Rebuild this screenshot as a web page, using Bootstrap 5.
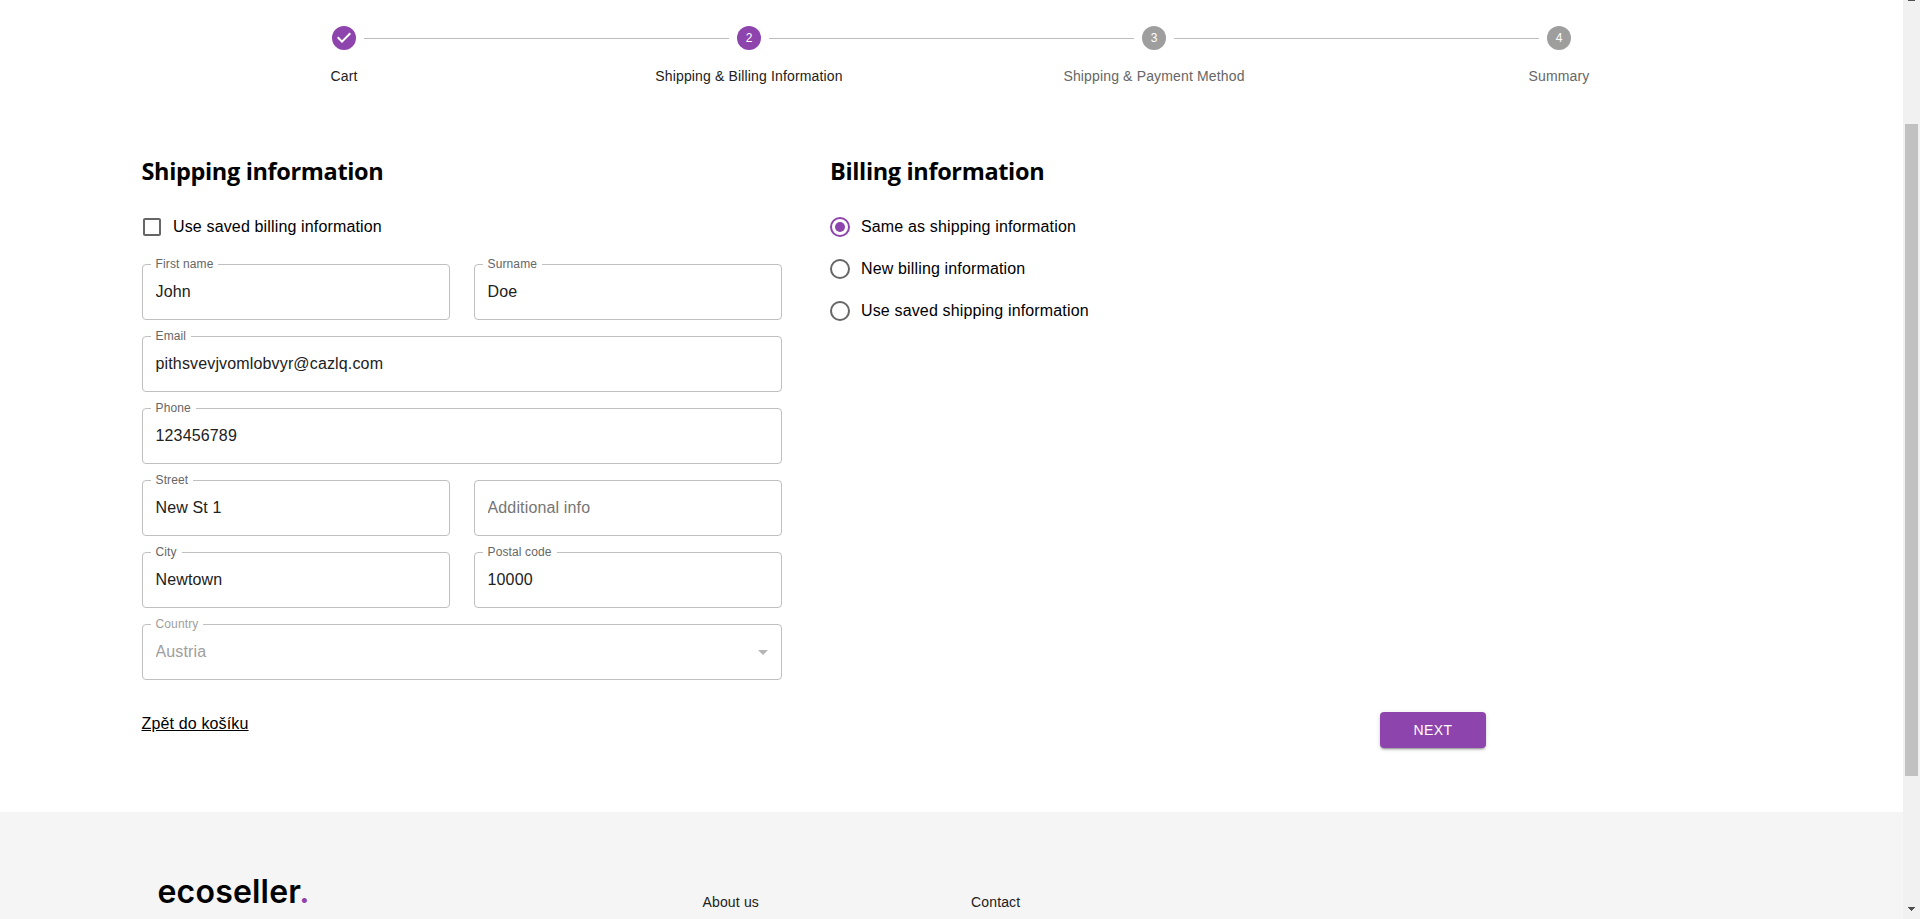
<!DOCTYPE html>
<html lang="en">
<head>
<meta charset="utf-8">
<meta name="viewport" content="width=device-width, initial-scale=1">
<title>ecoseller – Shipping &amp; Billing Information</title>
<link href="https://cdn.jsdelivr.net/npm/bootstrap@5.3.0/dist/css/bootstrap.min.css" rel="stylesheet">
<style>
  :root { --brand: #8e44ad; --line: #bdbdbd; --outline: #c0c0c0; --muted: #666; }
  body { font-family: "Liberation Sans", Arial, sans-serif; color: #000; letter-spacing: .15px; background: #fff; }
  .viewport { height: 919px; }
  .page-inner { width: 1620px; margin-left: 141.5px; }

  /* stepper */
  .stepper { padding-top: 26px; }
  .step { font-size: 14px; line-height: 20px; }
  .step .track { height: 24px; }
  .step .rail { height: 0; margin-top: 1px; border-top: 1px solid var(--line); }
  .step .rail.none { border-color: transparent; }
  .step .dot { width: 24px; height: 24px; margin: 0 8px; display: block; }
  .step .caption { margin-top: 16px; color: var(--muted); }
  .step .caption.on { color: #212121; }
  .dot text { font: 12px "Liberation Sans", Arial, sans-serif; fill: #fff; letter-spacing: 0; }

  /* forms */
  .forms { margin-top: 65px; height: 561px; }
  .ship { width: 640px; }
  .bill { width: 656px; margin-left: 48.5px; }
  h2 { font: 700 23.5px/40px "Open Sans", "Noto Sans", sans-serif; letter-spacing: -.35px; }
  .choices { padding-top: 15px; }
  .choice { height: 42px; line-height: 24px; gap: 9px; margin-left: -1.5px; }
  .bill .choice { margin-left: -2px; }
  .choice svg { width: 24px; height: 24px; }
  .fields { display: grid; grid-template-columns: 308px 308px; column-gap: 24px; row-gap: 16px; margin-top: 16px; }
  .wide { grid-column: span 2; }
  .field { height: 56px; }
  .field .form-control { height: 56px; border: 1px solid var(--outline); border-radius: 4px; padding: 0 13px; font-size: 16px; letter-spacing: .15px; color: #212121; background: #fff; box-shadow: none; }
  .field .form-control::placeholder { color: #757575; opacity: 1; }
  .field label { position: absolute; left: 9px; top: -8px; padding: 0 5px; background: #fff; font-size: 12px; line-height: 17px; letter-spacing: .13px; color: var(--muted); }
  .field.off label, .field.off .form-control { color: #9e9e9e; }
  .field .caret { position: absolute; right: 7px; top: 16px; width: 24px; height: 24px; }
  .actions { height: 36px; width: 1344.5px; }
  .back { color: #000; line-height: 24px; }
  .btn-next { width: 106px; height: 36px; padding: 0; color: #fff; background: var(--brand); border: 0; border-radius: 4px; font-size: 14px; letter-spacing: .4px; box-shadow: 0 3px 1px -2px rgba(0,0,0,.2), 0 2px 2px rgba(0,0,0,.14), 0 1px 5px rgba(0,0,0,.12); }

  footer { background: #f5f5f5; margin-top: 64px; font-size: 14px; }
  .brand-name { font: 600 32px/40px Inter, sans-serif; letter-spacing: .2px; width: 545px; margin: 60px 0 0 16px; }
  .brand-name span { color: var(--brand); }
  footer a { color: #212121; text-decoration: none; margin-top: 80px; line-height: 20px; width: 268.5px; }

  /* scroll gutter */
  .gutter { width: 17px; background: #f1f1f1; }
  .gutter .thumb { width: 13px; height: 652px; background: #c1c1c1; margin-top: 123px; }
  .gutter svg { display: block; width: 7px; }
</style>
</head>
<body>
<div class="viewport d-flex overflow-hidden">
  <div class="flex-grow-1 d-flex flex-column overflow-hidden">
    <div class="page-inner">
      <div class="stepper d-flex text-center">
        <div class="step w-25">
          <div class="track d-flex align-items-center">
            <div class="rail none flex-fill"></div>
            <svg class="dot" viewBox="0 0 24 24"><path fill="#8e44ad" d="M12 0a12 12 0 1 0 0 24 12 12 0 0 0 0-24zm-2 17l-5-5 1.4-1.4 3.6 3.6 7.6-7.6L19 8l-9 9z"/></svg>
            <div class="rail flex-fill"></div>
          </div>
          <div class="caption on">Cart</div>
        </div>
        <div class="step w-25">
          <div class="track d-flex align-items-center">
            <div class="rail flex-fill"></div>
            <svg class="dot" viewBox="0 0 24 24"><circle cx="12" cy="12" r="12" fill="#8e44ad"/><text x="12" y="16" text-anchor="middle">2</text></svg>
            <div class="rail flex-fill"></div>
          </div>
          <div class="caption on">Shipping &amp; Billing Information</div>
        </div>
        <div class="step w-25">
          <div class="track d-flex align-items-center">
            <div class="rail flex-fill"></div>
            <svg class="dot" viewBox="0 0 24 24"><circle cx="12" cy="12" r="12" fill="#9e9e9e"/><text x="12" y="16" text-anchor="middle">3</text></svg>
            <div class="rail flex-fill"></div>
          </div>
          <div class="caption">Shipping &amp; Payment Method</div>
        </div>
        <div class="step w-25">
          <div class="track d-flex align-items-center">
            <div class="rail flex-fill"></div>
            <svg class="dot" viewBox="0 0 24 24"><circle cx="12" cy="12" r="12" fill="#9e9e9e"/><text x="12" y="16" text-anchor="middle">4</text></svg>
            <div class="rail none flex-fill"></div>
          </div>
          <div class="caption">Summary</div>
        </div>
      </div>

      <div class="forms d-flex">
        <section class="ship">
          <h2 class="mb-0">Shipping information</h2>
          <div class="choices">
            <label class="choice d-flex align-items-center">
              <svg viewBox="0 0 24 24"><path fill="#666" d="M19 5v14H5V5h14m0-2H5c-1.1 0-2 .9-2 2v14c0 1.1.9 2 2 2h14c1.1 0 2-.9 2-2V5c0-1.1-.9-2-2-2z"/></svg>
              <span>Use saved billing information</span>
            </label>
          </div>
          <div class="fields">
            <div class="field position-relative"><input class="form-control" id="first" value="John"><label for="first">First name</label></div>
            <div class="field position-relative"><input class="form-control" id="last" value="Doe"><label for="last">Surname</label></div>
            <div class="field position-relative wide"><input class="form-control" id="mail" value="pithsvevjvomlobvyr@cazlq.com"><label for="mail">Email</label></div>
            <div class="field position-relative wide"><input class="form-control" id="tel" value="123456789"><label for="tel">Phone</label></div>
            <div class="field position-relative"><input class="form-control" id="street" value="New St 1"><label for="street">Street</label></div>
            <div class="field position-relative"><input class="form-control" placeholder="Additional info"></div>
            <div class="field position-relative"><input class="form-control" id="city" value="Newtown"><label for="city">City</label></div>
            <div class="field position-relative"><input class="form-control" id="zip" value="10000"><label for="zip">Postal code</label></div>
            <div class="field position-relative wide off"><input class="form-control" id="country" value="Austria" disabled><label for="country">Country</label>
              <svg class="caret" viewBox="0 0 24 24"><path fill="#b5b5b5" d="M7 10l5 5 5-5z"/></svg></div>
          </div>
        </section>
        <section class="bill">
          <h2 class="mb-0">Billing information</h2>
          <div class="choices">
            <label class="choice d-flex align-items-center">
              <svg viewBox="0 0 24 24"><circle cx="12" cy="12" r="9" fill="none" stroke="#8e44ad" stroke-width="2"/><circle cx="12" cy="12" r="5" fill="#8e44ad"/></svg>
              <span>Same as shipping information</span>
            </label>
            <label class="choice d-flex align-items-center">
              <svg viewBox="0 0 24 24"><circle cx="12" cy="12" r="9" fill="none" stroke="#666" stroke-width="2"/></svg>
              <span>New billing information</span>
            </label>
            <label class="choice d-flex align-items-center">
              <svg viewBox="0 0 24 24"><circle cx="12" cy="12" r="9" fill="none" stroke="#666" stroke-width="2"/></svg>
              <span>Use saved shipping information</span>
            </label>
          </div>
        </section>
      </div>

      <div class="actions d-flex justify-content-between align-items-start">
        <a class="back" href="#">Zpět do košíku</a>
        <button class="btn btn-next" type="button">NEXT</button>
      </div>
    </div>

    <footer class="flex-grow-1">
      <div class="page-inner d-flex">
        <div class="brand-name">ecoseller<span>.</span></div>
        <a href="#">About us</a>
        <a href="#">Contact</a>
      </div>
    </footer>
  </div>

  <div class="gutter d-flex flex-column align-items-center flex-shrink-0">
    <svg height="1" viewBox="0 0 7 1"><path fill="#505050" d="M0 0h7v1H0z"/></svg>
    <div class="thumb"></div>
    <svg class="mt-auto mb-2" height="4" viewBox="0 0 7 4" shape-rendering="crispEdges"><path fill="#505050" d="M0 0h7v1H6v1H5v1H4v1H3V3H2V2H1V1H0z"/></svg>
  </div>
</div>
<script src="https://cdn.jsdelivr.net/npm/bootstrap@5.3.0/dist/js/bootstrap.bundle.min.js"></script>
</body>
</html>
